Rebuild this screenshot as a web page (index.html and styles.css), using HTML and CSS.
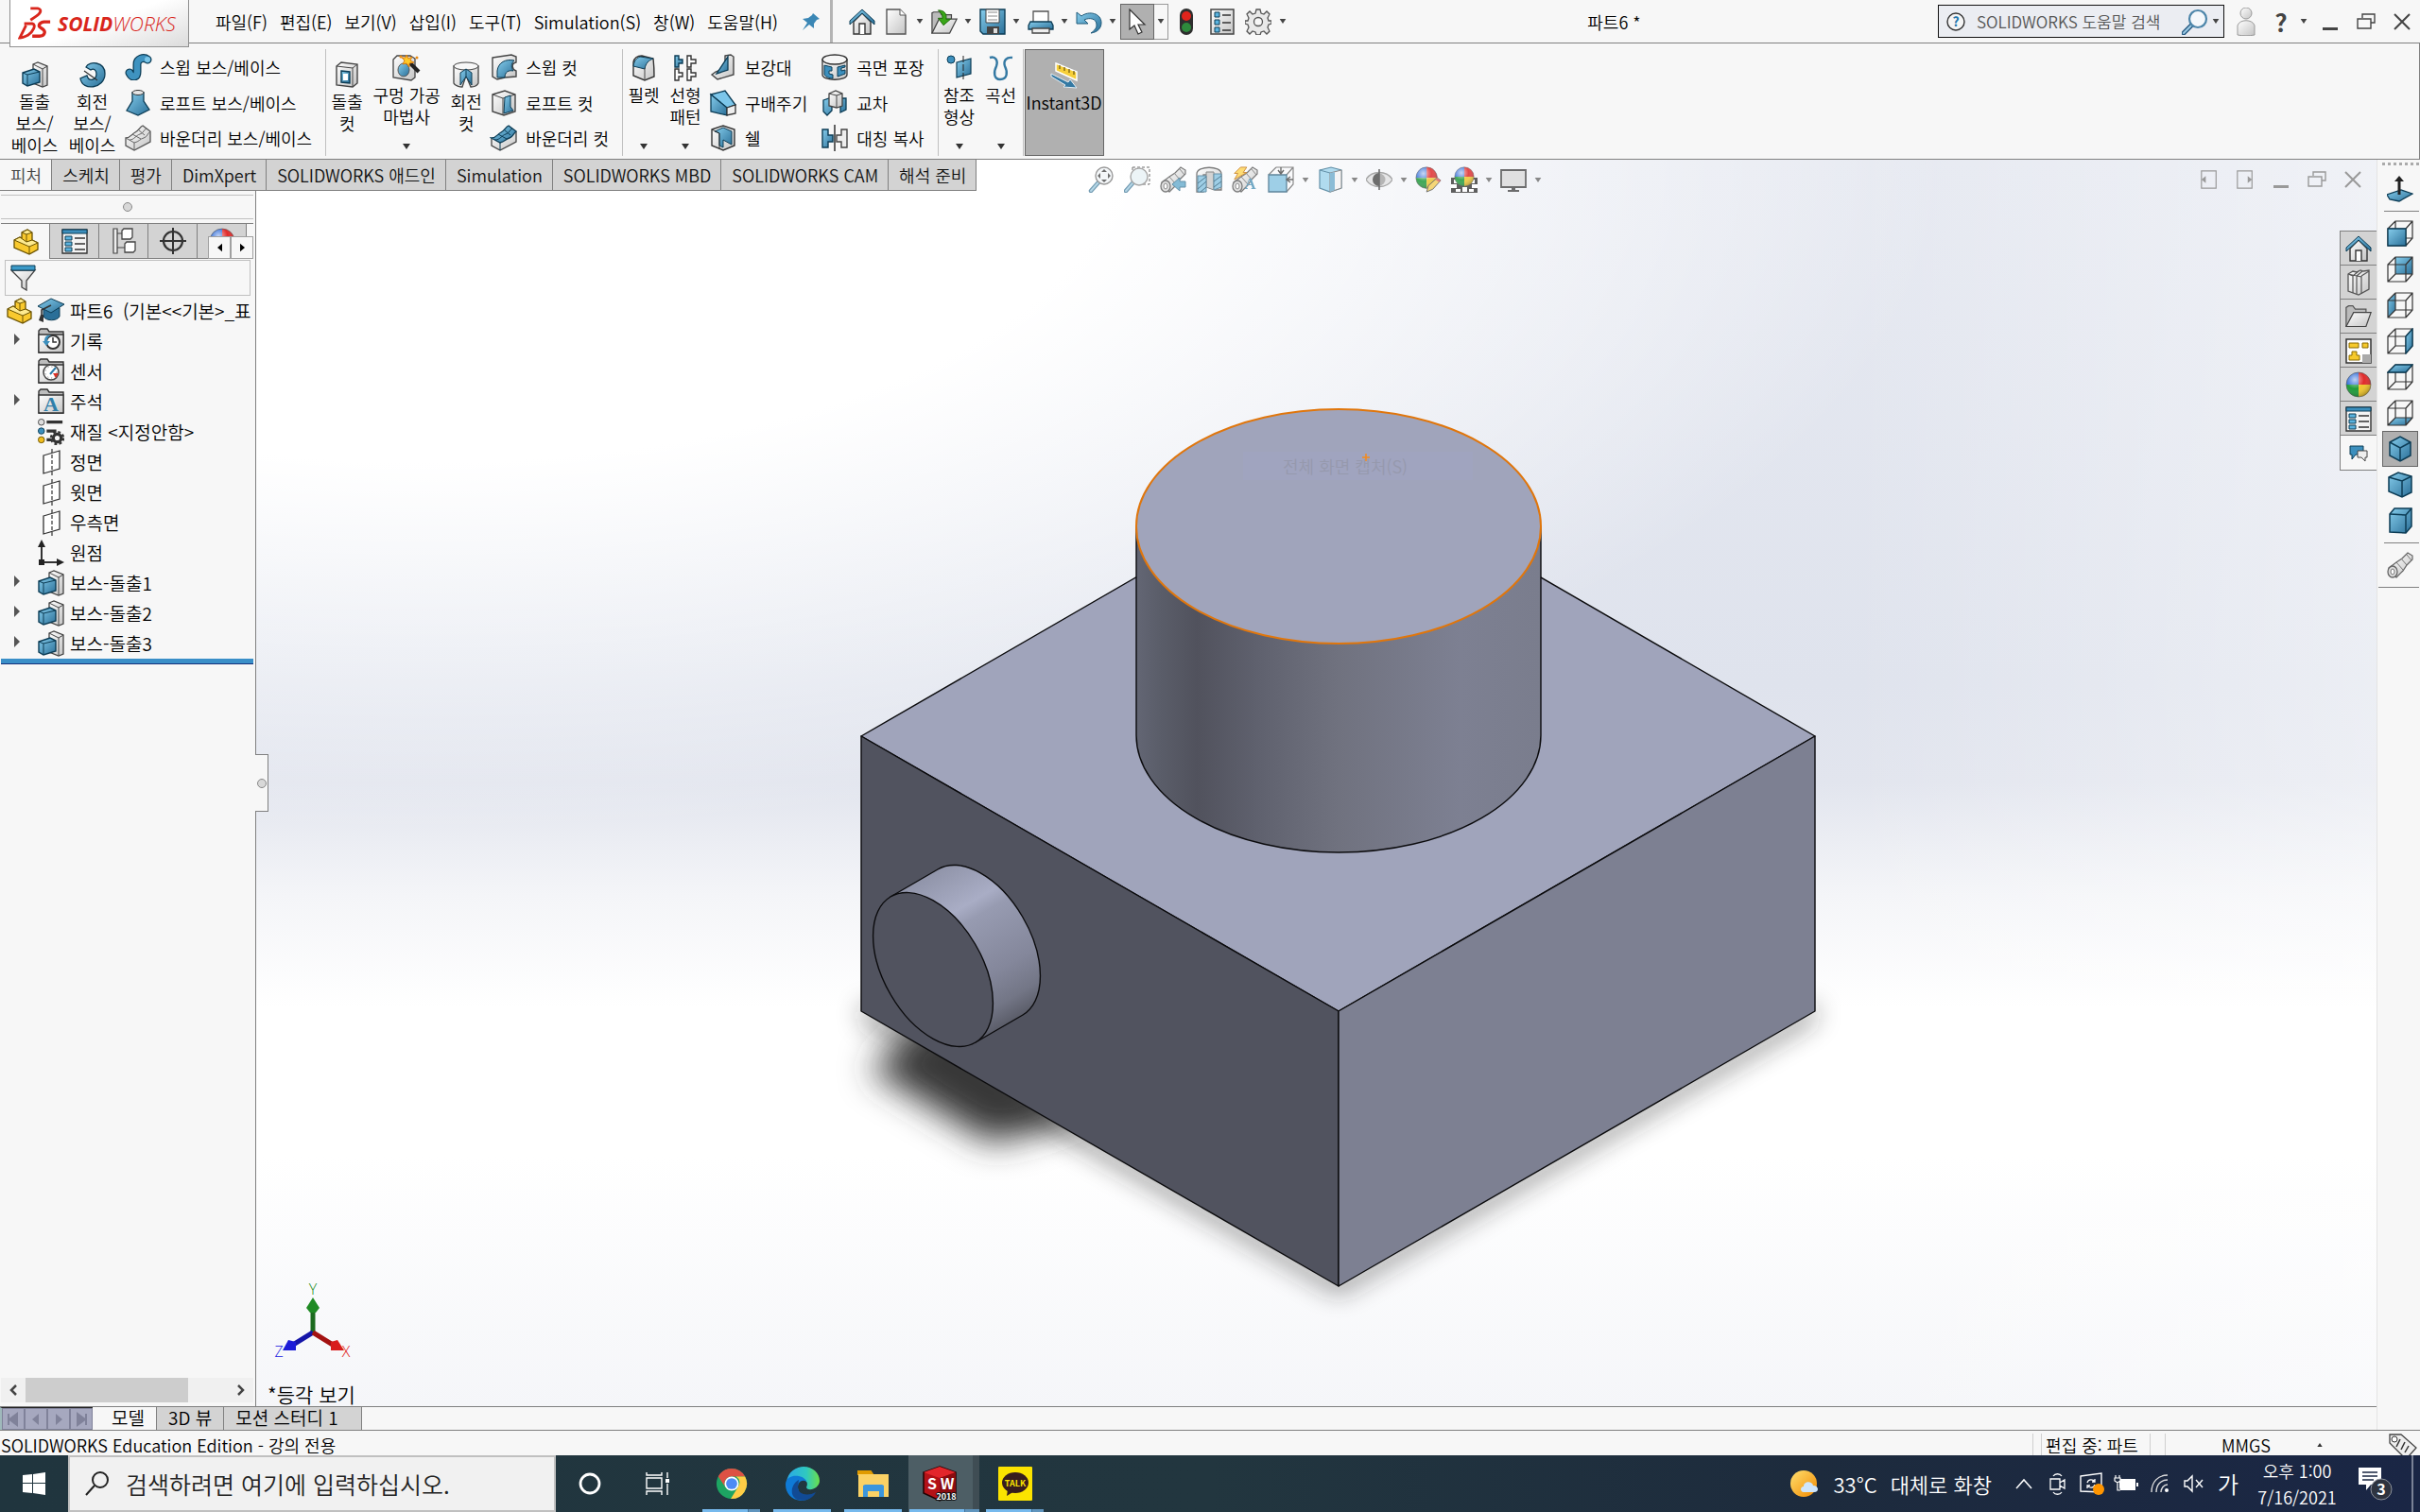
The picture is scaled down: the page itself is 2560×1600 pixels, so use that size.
FILE: index.html
```html
<!DOCTYPE html>
<html lang="ko">
<head>
    <meta charset="UTF-8">
    <meta name="viewport" content="width=device-width, initial-scale=1.0">
    <title>SOLIDWORKS - 파트6</title>
    <link rel="stylesheet" href="styles.css">
</head>
<body>
    <!-- icon sprite -->
    <svg class="sprite" aria-hidden="true">
        <defs>
            <linearGradient id="blue" x1="0" y1="0" x2="1" y2="1"><stop offset="0" stop-color="#86cdec"/><stop offset="1" stop-color="#2a6f98"/></linearGradient>
            <linearGradient id="steel" x1="0" y1="0" x2="1" y2="1"><stop offset="0" stop-color="#ffffff"/><stop offset="1" stop-color="#c4c4c4"/></linearGradient>
            <linearGradient id="sun" x1="0" y1="0" x2="1" y2="1"><stop offset="0" stop-color="#ffe070"/><stop offset="1" stop-color="#f28a00"/></linearGradient>
            <linearGradient id="edge-top" x1="0" y1="0" x2="1" y2="0"><stop offset="0" stop-color="#2aa9e8"/><stop offset="0.6" stop-color="#2fc8c0"/><stop offset="1" stop-color="#6be04a"/></linearGradient>
            <radialGradient id="shine" cx="0.35" cy="0.3" r="0.75"><stop offset="0" stop-color="#fff" stop-opacity="0.7"/><stop offset="0.5" stop-color="#fff" stop-opacity="0"/><stop offset="1" stop-color="#000" stop-opacity="0.3"/></radialGradient>
        </defs>

        <symbol id="i-arrow" viewBox="0 0 8 6"><path d="M0 0h8L4 6z" fill="currentColor"/></symbol>
        <symbol id="i-home" viewBox="0 0 28 28"><path d="M5 14v13h18V14l-9-9z" fill="url(#steel)" stroke="#333" stroke-width="1.4"/><path d="M11 27v-11h6v11" fill="#fff" stroke="#333" stroke-width="1.4"/><path d="M1 13L14 1l13 12v4L14 5 1 17z" fill="url(#blue)" stroke="#0c3c55"/></symbol>
        <symbol id="i-new" viewBox="0 0 28 28"><path d="M4 1h14l6 6v20H4z" fill="url(#steel)" stroke="#555" stroke-width="1.4"/><path d="M18 1v6h6" fill="#fff" stroke="#555"/></symbol>
        <symbol id="i-open" viewBox="0 0 30 28"><path d="M1 27V4l2-1h7l2 3h11v5" fill="#bbb" stroke="#444" stroke-width="1.3"/><path d="M1 27L9 11h20l-8 16z" fill="url(#steel)" stroke="#444" stroke-width="1.3"/><path d="M8 1c7 0 10 4 9 10h5l-8 7-6-8h5c0-4-2-6-5-9z" fill="#39a618" stroke="#1b6808"/></symbol>
        <symbol id="i-save" viewBox="0 0 28 28"><path d="M1 1h26v26H4l-3-3z" fill="url(#blue)" stroke="#0c3c55" stroke-width="1.4"/><path d="M7 1h14v14H7z" fill="#fff" stroke="#444"/><path d="M9 4h10M9 8h10M9 12h10" stroke="#888"/><path d="M8 19h13v8H8z" fill="#444"/><path d="M15 21h4v5h-4z" fill="#ddd"/></symbol>
        <symbol id="i-print" viewBox="0 0 28 28"><path d="M6 3h16v12H6z" fill="#fff" stroke="#555" stroke-width="1.3"/><path d="M3 14h22l2 4v4H1v-4z" fill="url(#blue)" stroke="#0c3c55" stroke-width="1.3"/><path d="M5 21h18v5H5z" fill="#eee" stroke="#444" stroke-width="1.3"/></symbol>
        <symbol id="i-undo" viewBox="0 0 28 28"><path d="M1 4v12h12l-4-4c6-3 13-1 13 5 0 4-2 6-6 9 7-1 11-5 11-11C27 5 14 2 6 8z" fill="url(#blue)" stroke="#1d5878"/></symbol>
        <symbol id="i-cursor" viewBox="0 0 28 28"><path d="M6 1v21l5-4 4 9 4-2-4-8h7z" fill="#fff" stroke="#333" stroke-width="1.2"/></symbol>
        <symbol id="i-light" viewBox="0 0 28 28"><rect x="7" y="0" width="14" height="28" rx="7" fill="#2e2e2e"/><circle cx="14" cy="8" r="5" fill="#e0241c"/><circle cx="14" cy="20" r="5" fill="#2e8a3c"/></symbol>
        <symbol id="i-options" viewBox="0 0 28 28"><path d="M2 1h24v26H2z" fill="url(#steel)" stroke="#444" stroke-width="1.5"/><path d="M6 4h5v5H6zM6 12h5v5H6zM6 20h5v5H6z" fill="#5bb4e0" stroke="#0c3c55"/><path d="M14 7h9M14 15h9M14 23h9" stroke="#333" stroke-width="1.3"/></symbol>
        <symbol id="i-gear" viewBox="0 0 28 28"><path d="M12 1h4l1 4 3 1 3-3 3 3-2 4 1 3 3 0v3l-3 1-1 3 2 4-3 3-3-3-3 1-1 3h-4l-1-3-3-1-3 3-3-3 2-4-1-3-3-1v-3l3 0 1-3-2-4 3-3 3 3 3-1z" fill="#e9e9e9" stroke="#555" stroke-width="1.3"/><circle cx="14" cy="14" r="4.500" fill="#f7f7f7" stroke="#555" stroke-width="1.3"/></symbol>
        <symbol id="i-pin" viewBox="0 0 20 20"><path d="M12 1l7 6-3 1-3 4 0 5-5-4-7 6 5-8-5-4 6-1 4-3z" fill="#3b87b5"/></symbol>
        <symbol id="i-lens" viewBox="0 0 28 28"><path d="M11 17l-9 9" stroke="#2c5f86" stroke-width="5" stroke-linecap="round"/><path d="M11 17l-9 9" stroke="#9ccbe6" stroke-width="2" stroke-linecap="round"/><circle cx="17" cy="11" r="9" fill="#f4f8fb" stroke="#4d86aa" stroke-width="2.200"/></symbol>
        <symbol id="i-user" viewBox="0 0 20 30"><circle cx="10" cy="6" r="6" fill="url(#steel)" stroke="#999"/><path d="M1 29V19c2-7 16-7 18 0v10c-5 1-13 1-18 0z" fill="url(#steel)" stroke="#999"/></symbol>
        <symbol id="i-min" viewBox="0 0 20 20"><path d="M2 16h16v3H2z" fill="currentColor"/></symbol>
        <symbol id="i-restore" viewBox="0 0 20 20"><path d="M6 6V2h13v9h-4M1 7h14v10H1z" fill="none" stroke="currentColor" stroke-width="1.4"/></symbol>
        <symbol id="i-close" viewBox="0 0 20 20"><path d="M2 2l16 16M18 2L2 18" stroke="currentColor" stroke-width="2"/></symbol>
        <symbol id="i-prev-doc" viewBox="0 0 20 22"><path d="M1 1h17v20H1z" fill="none" stroke="currentColor" stroke-width="1.3"/><path d="M6 7v8l-5-4z" fill="currentColor"/></symbol>
        <symbol id="i-next-doc" viewBox="0 0 20 22"><path d="M1 1h17v20H1z" fill="none" stroke="currentColor" stroke-width="1.3"/><path d="M13 7v8l5-4z" fill="currentColor"/></symbol>

        <symbol id="i-extrude" viewBox="0 0 28 28"><path d="M12 3l5-2 10 4v20l-5 2-10-4z" fill="url(#steel)" stroke="#444" stroke-width="1.3"/><path d="M22 8v19M12 3l10 5 5-3" fill="none" stroke="#444"/><path d="M1 12l12-4 6 3v11L6 26l-5-3z" fill="url(#blue)" stroke="#0c3c55" stroke-width="1.4"/><path d="M1 12l5 2 13-3M6 14v12" fill="none" stroke="#0c3c55"/></symbol>
        <symbol id="i-revolve" viewBox="0 0 28 28"><path d="M7 6C10-1 27 0 27 13c0 16-24 19-26 5l7-3c2 7 10 5 10-2 0-4-3-6-6-4z" fill="url(#blue)" stroke="#0c3c55" stroke-width="1.3"/><path d="M5 10l14 10" stroke="#333" stroke-width="1.3"/></symbol>
        <symbol id="i-sweep" viewBox="0 0 28 28"><path d="M5 20c3 6 8 5 8-1V11c0-6 7-8 11-5" fill="none" stroke="#0c3c55" stroke-width="9" stroke-linecap="round"/><path d="M5 20c3 6 8 5 8-1V11c0-6 7-8 11-5" fill="none" stroke="#3f93c0" stroke-width="6.500" stroke-linecap="round"/><circle cx="24" cy="6" r="3" fill="#7cc6e8"/></symbol>
        <symbol id="i-loft" viewBox="0 0 28 28"><path d="M8 3h12v9l6 9-12 6-12-5 6-10z" fill="url(#blue)" stroke="#0c3c55" stroke-width="1.3"/><ellipse cx="14" cy="3" rx="6" ry="2.500" fill="#e5e5e5" stroke="#333"/></symbol>
        <symbol id="i-boundary" viewBox="0 0 28 28"><path d="M1 14c5 0 6-4 10-6s5-6 8-7l8 6v11L10 27l-9-5z" fill="url(#steel)" stroke="#555" stroke-width="1.3"/><path d="M1 14l9 5c5-1 6-4 10-5s4-5 7-7M10 19v8M5 16c5 0 7-5 11-6s4-5 7-6M8 10l9 5M14 5l7 6" fill="none" stroke="#666"/></symbol>
        <symbol id="i-boundary-cut" viewBox="0 0 28 28"><path d="M1 14v8l9 5 17-9V7" fill="url(#steel)" stroke="#444" stroke-width="1.3"/><path d="M1 14c5 0 6-4 10-6s5-6 8-7l8 6c-3 2-3 6-7 7s-5 4-10 5z" fill="url(#blue)" stroke="#0c3c55" stroke-width="1.3"/><path d="M10 19v8M5 16c5 0 7-5 11-6s4-5 7-6M8 10l9 5M14 5l7 6" fill="none" stroke="#0c3c55"/></symbol>
        <symbol id="i-cut" viewBox="0 0 28 28"><path d="M3 5l5-4 17 2v20l-5 4-17-2z" fill="url(#steel)" stroke="#444" stroke-width="1.4"/><path d="M3 5l17 2 5-4M20 7v20" fill="none" stroke="#444"/><path d="M8 10l9 1v12l-9-1z" fill="url(#blue)" stroke="#0c3c55" stroke-width="1.400"/><path d="M10 20v-7h5v7z" fill="#fff"/></symbol>
        <symbol id="i-hole" viewBox="0 0 30 28"><path d="M1 5l4-4h14l5 3v20l-4 3-19-3z" fill="url(#steel)" stroke="#444" stroke-width="1.3"/><ellipse cx="12" cy="16" rx="6" ry="7" fill="url(#blue)" stroke="#555"/><path d="M15 5l13 13" stroke="#222" stroke-width="4"/><path d="M15 0l2 4 4-2-2 4 4 2-5 1 0 4-3-4-4 1 2-4-3-3 4 0z" fill="#ffc928" stroke="#d87c10"/><circle cx="26" cy="3" r="1.500" fill="#e88b12"/><circle cx="9" cy="2" r="1.500" fill="#e88b12"/></symbol>
        <symbol id="i-rev-cut" viewBox="0 0 28 28"><path d="M1 5v18c1 3 7 4 9 4l4-12 5 12c4 0 7-2 8-4V5z" fill="url(#steel)" stroke="#444" stroke-width="1.3"/><ellipse cx="14" cy="5" rx="13" ry="4" fill="#f7f7f7" stroke="#444"/><path d="M8 12l6-4 6 4v13l-6-9-6 9z" fill="url(#blue)" stroke="#0c3c55"/><path d="M14 8v9" stroke="#0c3c55"/></symbol>
        <symbol id="i-sweep-cut" viewBox="0 0 28 28"><path d="M2 4l20-3 5 2v6c-6 1-4 8 0 9v6l-12 1-8 2-5-3z" fill="url(#steel)" stroke="#444" stroke-width="1.4"/><path d="M7 25V18C8 9 16 5 25 7c-4 4-3 8-1 11-5-1-9 1-9 7z" fill="url(#blue)" stroke="#0c3c55"/></symbol>
        <symbol id="i-loft-cut" viewBox="0 0 28 28"><path d="M2 5l13-4 11 4v18l-12 4-12-4z" fill="url(#steel)" stroke="#444" stroke-width="1.4"/><path d="M2 5l11 4 13-4M13 9v18" fill="none" stroke="#444"/><path d="M15 8l6-2v12l3 4-10 3z" fill="url(#blue)" stroke="#0c3c55"/></symbol>
        <symbol id="i-fillet" viewBox="0 0 28 28"><path d="M3 8c1-5 5-7 9-7l12 3c0 1 1 6 1 19l-10 4L3 22z" fill="url(#steel)" stroke="#333" stroke-width="1.4"/><path d="M3 12c1-6 3-8 7-10l14 2c-5 2-8 5-9 11z" fill="url(#blue)" stroke="#0c3c55"/><path d="M15 14v13" stroke="#444"/></symbol>
        <symbol id="i-pattern" viewBox="0 0 28 28"><path d="M3 1h4v4h4v4H7v4H3z" fill="url(#blue)" stroke="#0c3c55" stroke-width="1.400"/><path d="M16 1h4v4h5v4h-5v4h-4zM3 15h4v4h4v4H7v4H3zM16 15h4v4h5v4h-5v4h-4z" fill="#fff" stroke="#333" stroke-width="1.4"/></symbol>
        <symbol id="i-rib" viewBox="0 0 28 28"><path d="M16 2l6-1 3 2v19L8 27l-6-5 4-3 10-4z" fill="url(#steel)" stroke="#444" stroke-width="1.4"/><path d="M19 3v14L7 21z" fill="url(#blue)" stroke="#0c3c55" stroke-width="1.300"/></symbol>
        <symbol id="i-draft" viewBox="0 0 28 28"><path d="M1 5l15-4 11 15-9 3z" fill="#7cc6ea" stroke="#0c3c55" stroke-width="1.3"/><path d="M1 5l17 14v8L1 23z" fill="url(#blue)" stroke="#0c3c55" stroke-width="1.3"/><path d="M18 19l9-3v9l-9 2z" fill="#eee" stroke="#333" stroke-width="1.3"/></symbol>
        <symbol id="i-shell" viewBox="0 0 28 28"><path d="M2 5l12-4 12 4v17l-12 5-12-5z" fill="url(#steel)" stroke="#333" stroke-width="1.400"/><path d="M5 7l9-4 9 4v14l-9-5v8l-4-2V9z" fill="url(#blue)" stroke="#0c3c55"/><path d="M2 5l8 4v17" fill="none" stroke="#333"/></symbol>
        <symbol id="i-wrap" viewBox="0 0 28 28"><path d="M1 6v16c0 7 26 7 26 0V6z" fill="url(#steel)" stroke="#333" stroke-width="1.3"/><ellipse cx="14" cy="6" rx="13" ry="5" fill="#f6f6f6" stroke="#333" stroke-width="1.3"/><path d="M3 12l8 2v4H8v3l4 1v4c-4 0-8-2-9-4zM25 12l-8 2v10l8-3v-4l-4 1v-3l4-1z" fill="#3c8fbd" stroke="#0c3c55"/></symbol>
        <symbol id="i-intersect" viewBox="0 0 28 28"><path d="M2 11l9-3v14l-5 5-4-4zM20 9h6v12l-6 3z" fill="url(#blue)" stroke="#0c3c55" stroke-width="1.3"/><path d="M8 4l7-3 7 3v13l-6 2-8-2z" fill="url(#steel)" stroke="#444" stroke-width="1.3"/><path d="M8 4l8 2 6-2M16 6v13" fill="none" stroke="#444"/></symbol>
        <symbol id="i-mirror" viewBox="0 0 28 28"><path d="M1 5h6v6h5v7H7v6H1z" fill="url(#blue)" stroke="#0c3c55" stroke-width="1.400"/><path d="M27 5h-6v6h-5v7h5v6h6z" fill="#eee" stroke="#444" stroke-width="1.400"/><path d="M14 0v28" stroke="#222" stroke-width="1.4"/></symbol>
        <symbol id="i-ref" viewBox="0 0 28 28"><circle cx="5" cy="5" r="4" fill="#3c8fbd" stroke="#0c3c55"/><path d="M11 8l15-4v16l-15 4z" fill="url(#blue)" stroke="#0c3c55" stroke-width="1.2"/><path d="M18 1v27" stroke="#222" stroke-dasharray="7 2"/></symbol>
        <symbol id="i-curve" viewBox="0 0 28 28"><path d="M2 3c6-2 9 3 7 9-3 6-3 14 4 14 8 0 8-8 5-14-2-6 2-10 8-9" fill="none" stroke="#3479a3" stroke-width="2.400"/></symbol>
        <symbol id="i-instant" viewBox="0 0 30 28"><path d="M6 1l22 9v9L6 9z" fill="#f6cf3a" stroke="#fff" stroke-width="1.5"/><path d="M10 3v4M15 5v4M20 7v4M25 9v4" stroke="#6b5610" stroke-width="1.2"/><path d="M1 12l18 9 2-3 7 9-14-1 2-2-15-9z" fill="#3479a3" stroke="#e4eef4"/></symbol>

        <symbol id="i-zoom-fit" viewBox="0 0 28 28"><path d="M11 17l-8 9" stroke="#5a8aa5" stroke-width="4.500" stroke-linecap="round"/><path d="M11 17l-8 9" stroke="#a8cfe2" stroke-width="2" stroke-linecap="round"/><circle cx="17" cy="10" r="9" fill="#f3f6f8" stroke="#888" stroke-width="1.400"/><path d="M17 3l3 3h-6zM17 17l3-3h-6zM10 10l3-3v6zM24 10l-3-3v6z" fill="#555"/></symbol>
        <symbol id="i-zoom-area" viewBox="0 0 28 28"><path d="M9 1h18v18H20M9 1v4" fill="none" stroke="#555" stroke-dasharray="3 2"/><path d="M9 18l-7 8" stroke="#5a8aa5" stroke-width="4.500" stroke-linecap="round"/><path d="M9 18l-7 8" stroke="#a8cfe2" stroke-width="2" stroke-linecap="round"/><circle cx="16" cy="11" r="9" fill="#eaf3f6" stroke="#999" stroke-width="1.400"/></symbol>
        <symbol id="i-scope" viewBox="0 0 28 28"><path d="M2 17l8-6 6-4 6-6 5 3v4l-6 6-4 6-7 7z" fill="url(#steel)" stroke="#666" stroke-width="1.2"/><path d="M15 7l6 7M21 3l5 6M10 11l7 8" stroke="#777"/><ellipse cx="6" cy="21" rx="5" ry="6" fill="#ddd" stroke="#666" stroke-width="1.3"/><ellipse cx="6" cy="21" rx="2" ry="3" fill="#fff" stroke="#777"/></symbol>
        <symbol id="i-back-arrow" viewBox="0 0 28 28"><path d="M27 16v6h-6v4l-8-7 8-7v4z" fill="#6fb0d0" stroke="#4a7f9a"/></symbol>
        <symbol id="i-section" viewBox="0 0 28 28"><path d="M1 8c0-9 26-9 26 0v17h-7V9H8v18H1z" fill="url(#steel)" stroke="#666" stroke-width="1.3"/><path d="M11 6h8v19l-8-3z" fill="#ccc" stroke="#777"/><path d="M2 10h9v17H2zM19 8h8v14l-8 3z" fill="#8ec6e2" stroke="#4a7f9a"/><path d="M2 18l9-7M2 24l9-8M5 27l6-5M19 16l8-6M19 22l8-6" stroke="#33657f"/></symbol>
        <symbol id="i-cube-hud" viewBox="0 0 28 28"><path d="M9 1h18v18l-7 8M1 9l8-8M20 9l7-8" fill="none" stroke="#777" stroke-width="1.2"/><path d="M1 9h19v18H1z" fill="#8fc8e4" stroke="#44728a" stroke-width="1.300"/><path d="M14 1v6m-3-3l3 4 3-4M27 14h-6m3-3l-4 3 4 3" fill="none" stroke="#555" stroke-width="1.400"/></symbol>
        <symbol id="i-display" viewBox="0 0 28 28"><path d="M3 4l12-3 11 3v19l-12 4-11-4z" fill="#a4d6ee" stroke="#4a7f9a" stroke-width="1.200"/><path d="M14 7l12-3v19l-12 4z" fill="#f4f4f4" stroke="#777"/><path d="M14 7l5-1v19l-5 2z" fill="#79b2d0"/><path d="M3 4l11 3" stroke="#4a7f9a"/></symbol>
        <symbol id="i-eye" viewBox="0 0 28 28"><path d="M0 14C6 4 22 4 28 14 22 24 6 24 0 14z" fill="#e4e4e4" stroke="#999" stroke-width="1.3"/><circle cx="14" cy="14" r="6.500" fill="#aaa"/><path d="M14 7a7 7 0 0 0 0 14z" fill="#555"/><path d="M14 3v22" stroke="#555" stroke-width="1.6"/></symbol>
        <symbol id="i-ball" viewBox="0 0 28 28"><path d="M14 14V1A13 13 0 0 0 1 14z" fill="#2f6bd8"/><path d="M14 14h13A13 13 0 0 0 14 1z" fill="#e02b2b"/><path d="M14 14H1a13 13 0 0 0 13 13z" fill="#1f9a3a"/><path d="M14 14v13a13 13 0 0 0 13-13z" fill="#f0c62a"/><circle cx="14" cy="14" r="13" fill="url(#shine)" stroke="#555" stroke-width="0.600"/></symbol>
        <symbol id="i-appearance" viewBox="0 0 30 30"><use href="#i-ball" width="26" height="26"/><path d="M13 29l2-7 10-9 4 3-9 10z" fill="#f5d161" stroke="#555"/><path d="M25 13l4 3-2 2-4-3z" fill="#d66"/></symbol>
        <symbol id="i-scene" viewBox="0 0 28 28"><path d="M0 12h28v16H0z" fill="#444"/><path d="M3 14h5v4H3zM20 14h5v4h-5zM0 19h6v4H0zM12 22h5v5h-5zM22 19h6v4h-6zM5 24h5v3H5zM19 24h5v3h-5z" fill="#fff"/><use href="#i-ball" x="3" width="22" height="22"/></symbol>
        <symbol id="i-monitor" viewBox="0 0 28 28"><path d="M1 4h26v18H1z" fill="#ddd" stroke="#555" stroke-width="1.800"/><path d="M12 22h4v3h4v2H8v-2h4z" fill="#555"/></symbol>

        <symbol id="i-part" viewBox="0 0 28 28"><path d="M2 12l6-3 2 1V4l6-3 5 3v8l6 3v7l-9 5L2 20z" fill="#f9c92e" stroke="#6a5200" stroke-width="1.3"/><path d="M10 4l6-3 5 3-6 2zM2 12l6-3 7 5 6-2 6 3-9 4z" fill="#fdea90" stroke="#6a5200"/><path d="M15 6v8M18 19v8" stroke="#6a5200"/></symbol>
        <symbol id="i-props" viewBox="0 0 28 28"><path d="M1 2h26v25H1z" fill="#f4f4f4" stroke="#333" stroke-width="1.4"/><path d="M1 2h26v4H1z" fill="#3c8fbd" stroke="#0c3c55"/><path d="M4 9h7v4H4zM4 15h7v4H4zM4 21h7v4H4z" fill="#5bb4e0" stroke="#0c3c55"/><path d="M14 11h11M14 17h11M14 23h11" stroke="#333" stroke-width="1.3"/></symbol>
        <symbol id="i-config" viewBox="0 0 28 28"><path d="M3 1h4v26H3zM7 6h5M7 21h8" fill="#eee" stroke="#444" stroke-width="1.2"/><path d="M12 3l2-2h9v9l-2 2h-9zM15 17l2-2h9v9l-2 2h-9z" fill="#fff" stroke="#444" stroke-width="1.300"/></symbol>
        <symbol id="i-target" viewBox="0 0 28 28"><circle cx="14" cy="14" r="10" fill="none" stroke="#333" stroke-width="2.200"/><path d="M14 0v28M0 14h28" stroke="#333" stroke-width="2"/></symbol>
        <symbol id="i-filter" viewBox="0 0 28 28"><path d="M1 6h25L17 17v10l-5-3v-7z" fill="url(#steel)" stroke="#444" stroke-width="1.300"/><path d="M1 1h25v5H1z" fill="#3c9ac8" stroke="#0c3c55"/></symbol>
        <symbol id="i-cap" viewBox="0 0 28 28"><path d="M6 12v8c3 5 14 5 17 0v-9z" fill="#2a6f98" stroke="#0c3c55"/><path d="M0 9L14 1l14 6-14 9z" fill="url(#blue)" stroke="#0c3c55"/><path d="M14 8L4 13v7" fill="none" stroke="#333" stroke-width="1.600"/><path d="M3 18h3l0 8-5-2z" fill="#333"/></symbol>
        <symbol id="i-folder" viewBox="0 0 28 28"><path d="M1 26V3l2-2h7l2 3h15v22z" fill="#bdbdbd" stroke="#333" stroke-width="1.4"/><path d="M1 7h26v19H1z" fill="url(#steel)" stroke="#333" stroke-width="1.3"/></symbol>
        <symbol id="i-history" viewBox="0 0 28 28"><use href="#i-folder"/><circle cx="16" cy="15" r="7" fill="#fff" stroke="#333" stroke-width="2"/><path d="M16 10v5h4" fill="none" stroke="#333" stroke-width="1.500"/><path d="M5 14l4 5 4-5h-3c0-3 1-5 4-6-5-1-7 2-7 6z" fill="#3c8fbd"/></symbol>
        <symbol id="i-sensor" viewBox="0 0 28 28"><use href="#i-folder"/><circle cx="14" cy="15" r="8" fill="#fff" stroke="#444" stroke-width="1.500"/><circle cx="14" cy="15" r="6" fill="none" stroke="#777" stroke-dasharray="1 3"/><path d="M13 17l6-7" stroke="#2b7aa8" stroke-width="2"/><path d="M16 16h6l-3 5z" fill="#d93024"/></symbol>
        <symbol id="i-material" viewBox="0 0 30 30"><circle cx="4" cy="4" r="3.500" fill="#ddd" stroke="#444"/><circle cx="4" cy="14" r="3.500" fill="#3c8fbd" stroke="#0c3c55"/><circle cx="4" cy="24" r="3.500" fill="#f1bd1e" stroke="#6a5200"/><path d="M10 4h18M10 14h11M10 24h6" stroke="#333" stroke-width="3.500"/><circle cx="22" cy="22" r="4.500" fill="none" stroke="#333" stroke-width="3.500"/><circle cx="22" cy="22" r="7" fill="none" stroke="#333" stroke-width="2.500" stroke-dasharray="3 2.500"/></symbol>
        <symbol id="i-plane" viewBox="0 0 28 28"><path d="M6 7l17-5v19L6 26z" fill="#fff" stroke="#333" stroke-width="1.3"/><path d="M15 0v28" stroke="#333" stroke-width="1.200" stroke-dasharray="4 2"/></symbol>
        <symbol id="i-origin" viewBox="0 0 28 28"><path d="M4 24V5M4 24h20" stroke="#333" stroke-width="2"/><path d="M4 0l4 8H0zM28 24l-8-4v8zM1 21h6v6H1z" fill="#222"/></symbol>

        <symbol id="i-normal" viewBox="0 0 28 28"><path d="M0 20l15-5 12 4-14 8-10-2z" fill="url(#blue)" stroke="#0c3c55" stroke-width="1.300"/><path d="M13 20V3" stroke="#222" stroke-width="3"/><path d="M13 0l5 6H8z" fill="#222"/></symbol>
        <symbol id="i-wire" viewBox="0 0 28 28"><path d="M1 9h19v18H1zM9 1h18v18H9zM1 9l8-8M20 9l7-8M20 27l7-8M1 27l8-8" fill="none" stroke="#333" stroke-width="1.2"/></symbol>
        <symbol id="i-front" viewBox="0 0 28 28"><use href="#i-wire"/><path d="M1 9h19v18H1z" fill="url(#blue)" stroke="#0c3c55" stroke-width="1.300"/></symbol>
        <symbol id="i-rear" viewBox="0 0 28 28"><path d="M9 1h18v18H9z" fill="url(#blue)"/><use href="#i-wire"/></symbol>
        <symbol id="i-left" viewBox="0 0 28 28"><path d="M1 9l8-8v18l-8 8z" fill="url(#blue)"/><use href="#i-wire"/></symbol>
        <symbol id="i-right" viewBox="0 0 28 28"><use href="#i-wire"/><path d="M20 9l7-8v18l-7 8z" fill="url(#blue)" stroke="#0c3c55" stroke-width="1.300"/></symbol>
        <symbol id="i-top" viewBox="0 0 28 28"><use href="#i-wire"/><path d="M1 9l8-8h18l-7 8z" fill="url(#blue)" stroke="#0c3c55" stroke-width="1.300"/></symbol>
        <symbol id="i-bottom" viewBox="0 0 28 28"><path d="M1 27l8-8h18l-7 8z" fill="url(#blue)"/><use href="#i-wire"/></symbol>
        <symbol id="i-iso" viewBox="0 0 28 28"><path d="M3 7l11-6 11 6v14l-11 6-11-6z" fill="url(#blue)" stroke="#0c3c55" stroke-width="1.500"/><path d="M3 7l11 6 11-6M14 13v14" fill="none" stroke="#0c3c55" stroke-width="1.500"/></symbol>
        <symbol id="i-tri" viewBox="0 0 28 28"><path d="M2 6l10-5 14 4v17l-10 5-14-6z" fill="url(#blue)" stroke="#0c3c55" stroke-width="1.500"/><path d="M2 6l14 4 10-5M16 10v17" fill="none" stroke="#0c3c55" stroke-width="1.500"/></symbol>
        <symbol id="i-di" viewBox="0 0 28 28"><path d="M3 7l5-6h18v19l-6 7-17-1z" fill="url(#blue)" stroke="#0c3c55" stroke-width="1.500"/><path d="M3 7l17 1 6-7M20 8v19" fill="none" stroke="#0c3c55" stroke-width="1.500"/></symbol>
        <symbol id="i-library" viewBox="0 0 28 28"><path d="M3 5l5-3 4 1 4-2 3 1 6-1v20l-11 6-11-4z" fill="url(#steel)" stroke="#555" stroke-width="1.3"/><path d="M3 5l5 2v18M8 7l6-5M12 7v19M12 7l6-5M17 7v19M17 7l8-5M3 5l14 3" fill="none" stroke="#555" stroke-width="1.200"/></symbol>
        <symbol id="i-folder-open" viewBox="0 0 32 28"><path d="M1 26V3l3-2h5l3 4h13v5" fill="#bbb" stroke="#555" stroke-width="1.400"/><path d="M1 26L10 9h21l-6 17z" fill="url(#steel)" stroke="#444" stroke-width="1.400"/></symbol>
        <symbol id="i-palette" viewBox="0 0 28 28"><path d="M1 2h26v25H1z" fill="#fff" stroke="#333" stroke-width="1.5"/><path d="M4 6h10v5H4zM18 6h6v5h-6zM7 15h5v4h3v5H4v-5h3z" fill="#f6c92c" stroke="#8a6a00"/><path d="M18 18h9v9h-9z" fill="#aaa"/></symbol>
        <symbol id="i-forum" viewBox="0 0 28 28"><path d="M5 7h14v9h-8l-4 5v-5H5z" fill="#3c8fbd" stroke="#0c3c55"/><path d="M13 12h10v7h-2v4l-4-4h-4z" fill="#eee" stroke="#444"/></symbol>
        <symbol id="i-tag" viewBox="0 0 30 24"><path d="M1 1h12l16 14-8 9H15L1 10z" fill="#eee" stroke="#444" stroke-width="1.300"/><circle cx="6" cy="6" r="3" fill="#fff" stroke="#333"/><path d="M12 6l-4 8M17 9l-4 8M21 13l-4 7" stroke="#333" stroke-width="1.500"/></symbol>
    </svg>

    <header class="titlebar">
        <div class="logo">
            <svg class="logo-mark" viewBox="0 0 38 36" fill="none" stroke="#d9261c" aria-hidden="true">
                <path d="M14 1h8c5 1 4 5-2 9l-6 4" stroke-width="3"/>
                <path d="M7 18h9c5 1 1 9-5 13-4 2-6 3-9 3L9 20" stroke-width="3"/>
                <path d="M36 16h-7c-6 1-7 5-3 7 7 4 3 9-2 9h-8" stroke-width="3.500"/>
            </svg>
            <span class="logo-text"><b>SOLID</b>WORKS</span>
        </div>
        <nav class="menu">
            <button>파일(F)</button>
            <button>편집(E)</button>
            <button>보기(V)</button>
            <button>삽입(I)</button>
            <button>도구(T)</button>
            <button>Simulation(S)</button>
            <button>창(W)</button>
            <button>도움말(H)</button>
        </nav>
        <button class="pin" aria-label="메뉴 고정"><svg width="20" height="20"><use href="#i-pin"/></svg></button>
        <div class="quick">
            <button class="tool" aria-label="홈"><svg><use href="#i-home"/></svg></button>
            <button class="tool" aria-label="새 문서"><svg><use href="#i-new"/></svg></button>
            <button class="drop" aria-label="새 문서 옵션"><svg><use href="#i-arrow"/></svg></button>
            <button class="tool" aria-label="열기"><svg><use href="#i-open"/></svg></button>
            <button class="drop" aria-label="열기 옵션"><svg><use href="#i-arrow"/></svg></button>
            <button class="tool" aria-label="저장"><svg><use href="#i-save"/></svg></button>
            <button class="drop" aria-label="저장 옵션"><svg><use href="#i-arrow"/></svg></button>
            <button class="tool" aria-label="인쇄"><svg><use href="#i-print"/></svg></button>
            <button class="drop" aria-label="인쇄 옵션"><svg><use href="#i-arrow"/></svg></button>
            <button class="tool" aria-label="실행 취소"><svg><use href="#i-undo"/></svg></button>
            <button class="drop" aria-label="실행 취소 옵션"><svg><use href="#i-arrow"/></svg></button>
            <button class="tool pressed" aria-label="선택"><svg><use href="#i-cursor"/></svg></button>
            <button class="drop boxed" aria-label="선택 옵션"><svg><use href="#i-arrow"/></svg></button>
            <button class="tool wide" aria-label="재생성"><svg><use href="#i-light"/></svg></button>
            <button class="tool wide" aria-label="파일 속성"><svg><use href="#i-options"/></svg></button>
            <button class="tool wide" aria-label="옵션"><svg><use href="#i-gear"/></svg></button>
            <button class="drop" aria-label="옵션 메뉴"><svg><use href="#i-arrow"/></svg></button>
        </div>
        <div class="doc-title">파트6 *</div>
        <div class="help-search">
            <svg width="20" height="20" viewBox="0 0 20 20"><circle cx="10" cy="10" r="9" fill="#f5f5f5" stroke="#333" stroke-width="1.4"/><text x="10" y="15" text-anchor="middle" font-size="14" font-weight="700" fill="#2377ad">?</text></svg>
            <input type="text" placeholder="SOLIDWORKS 도움말 검색" aria-label="SOLIDWORKS 도움말 검색">
            <button aria-label="검색"><svg width="28" height="28"><use href="#i-lens"/></svg></button>
            <button class="drop" aria-label="검색 옵션"><svg><use href="#i-arrow"/></svg></button>
        </div>
        <button class="user" aria-label="로그인"><svg width="20" height="30"><use href="#i-user"/></svg></button>
        <button class="question" aria-label="도움말">?</button>
        <button class="drop help-drop" aria-label="도움말 옵션"><svg><use href="#i-arrow"/></svg></button>
        <button class="win-btn" aria-label="최소화"><svg><use href="#i-min"/></svg></button>
        <button class="win-btn" aria-label="복원"><svg><use href="#i-restore"/></svg></button>
        <button class="win-btn" aria-label="닫기"><svg><use href="#i-close"/></svg></button>
    </header>

    <section class="ribbon">
        <div class="group">
            <button class="big low"><svg><use href="#i-extrude"/></svg><span>돌출<br>보스/<br>베이스</span></button>
            <button class="big low"><svg><use href="#i-revolve"/></svg><span>회전<br>보스/<br>베이스</span></button>
            <div class="stack">
                <button><svg><use href="#i-sweep"/></svg>스윕 보스/베이스</button>
                <button><svg><use href="#i-loft"/></svg>로프트 보스/베이스</button>
                <button><svg><use href="#i-boundary"/></svg>바운더리 보스/베이스</button>
            </div>
        </div>
        <div class="group">
            <button class="big low slim"><svg><use href="#i-cut"/></svg><span>돌출<br>컷</span></button>
            <button class="big hole"><svg><use href="#i-hole"/></svg><span>구멍 가공<br>마법사</span><svg class="more"><use href="#i-arrow"/></svg></button>
            <button class="big low slim"><svg><use href="#i-rev-cut"/></svg><span>회전<br>컷</span></button>
            <div class="stack">
                <button><svg><use href="#i-sweep-cut"/></svg>스윕 컷</button>
                <button><svg><use href="#i-loft-cut"/></svg>로프트 컷</button>
                <button><svg><use href="#i-boundary-cut"/></svg>바운더리 컷</button>
            </div>
        </div>
        <div class="group">
            <button class="big slim"><svg><use href="#i-fillet"/></svg><span>필렛</span><svg class="more"><use href="#i-arrow"/></svg></button>
            <button class="big slim"><svg><use href="#i-pattern"/></svg><span>선형<br>패턴</span><svg class="more"><use href="#i-arrow"/></svg></button>
            <div class="stack">
                <button><svg><use href="#i-rib"/></svg>보강대</button>
                <button><svg><use href="#i-draft"/></svg>구배주기</button>
                <button><svg><use href="#i-shell"/></svg>쉘</button>
            </div>
            <div class="stack second">
                <button><svg><use href="#i-wrap"/></svg>곡면 포장</button>
                <button><svg><use href="#i-intersect"/></svg>교차</button>
                <button><svg><use href="#i-mirror"/></svg>대칭 복사</button>
            </div>
        </div>
        <div class="group tight">
            <button class="big slim"><svg><use href="#i-ref"/></svg><span>참조<br>형상</span><svg class="more"><use href="#i-arrow"/></svg></button>
            <button class="big slim"><svg><use href="#i-curve"/></svg><span>곡선</span><svg class="more"><use href="#i-arrow"/></svg></button>
        </div>
        <button class="big low instant"><svg><use href="#i-instant"/></svg><span>Instant3D</span></button>
    </section>

    <div class="workspace">
        <nav class="ribbon-tabs">
            <button class="active">피처</button>
            <button>스케치</button>
            <button>평가</button>
            <button>DimXpert</button>
            <button>SOLIDWORKS 애드인</button>
            <button>Simulation</button>
            <button>SOLIDWORKS MBD</button>
            <button>SOLIDWORKS CAM</button>
            <button>해석 준비</button>
        </nav>

        <div class="main">
            <div class="content">
                <aside class="panel">
                    <div class="panel-grip"><i></i></div>
                    <div class="panel-tabs">
                        <button class="active" aria-label="FeatureManager"><svg><use href="#i-part"/></svg></button>
                        <button aria-label="PropertyManager"><svg><use href="#i-props"/></svg></button>
                        <button aria-label="ConfigurationManager"><svg><use href="#i-config"/></svg></button>
                        <button aria-label="DimXpertManager"><svg><use href="#i-target"/></svg></button>
                        <button aria-label="DisplayManager"><svg><use href="#i-ball"/></svg></button>
                        <div class="tab-scroll">
                            <button aria-label="이전 탭"><svg viewBox="0 0 8 12"><path d="M7 1v10L1 6z"/></svg></button>
                            <button aria-label="다음 탭"><svg viewBox="0 0 8 12"><path d="M1 1v10l6-5z"/></svg></button>
                        </div>
                    </div>
                    <label class="filter">
                        <svg width="28" height="28"><use href="#i-filter"/></svg>
                        <input type="text" aria-label="트리 필터">
                    </label>
                    <ul class="tree">
                        <li class="root"><svg><use href="#i-part"/></svg><svg><use href="#i-cap"/></svg><span>파트6&nbsp; (기본&lt;&lt;기본&gt;_표</span></li>
                        <li class="node"><svg><use href="#i-history"/></svg><span>기록</span></li>
                        <li><svg><use href="#i-sensor"/></svg><span>센서</span></li>
                        <li class="node"><svg viewBox="0 0 28 28"><use href="#i-folder"/><text class="letter-a" x="14" y="24" text-anchor="middle" font-size="22" fill="#2f7faa">A</text></svg><span>주석</span></li>
                        <li><svg><use href="#i-material"/></svg><span>재질 &lt;지정안함&gt;</span></li>
                        <li><svg><use href="#i-plane"/></svg><span>정면</span></li>
                        <li><svg><use href="#i-plane"/></svg><span>윗면</span></li>
                        <li><svg><use href="#i-plane"/></svg><span>우측면</span></li>
                        <li><svg><use href="#i-origin"/></svg><span>원점</span></li>
                        <li class="node"><svg><use href="#i-extrude"/></svg><span>보스-돌출1</span></li>
                        <li class="node"><svg><use href="#i-extrude"/></svg><span>보스-돌출2</span></li>
                        <li class="node"><svg><use href="#i-extrude"/></svg><span>보스-돌출3</span></li>
                    </ul>
                    <div class="rollback"></div>
                    <div class="scrollbar">
                        <button aria-label="왼쪽으로"><svg width="10" height="12" viewBox="0 0 10 12"><path d="M8 1L3 6l5 5" fill="none" stroke="#444" stroke-width="2.500"/></svg></button>
                        <div class="track"><div class="thumb"></div></div>
                        <button aria-label="오른쪽으로"><svg width="10" height="12" viewBox="0 0 10 12"><path d="M2 1l5 5-5 5" fill="none" stroke="#444" stroke-width="2.500"/></svg></button>
                    </div>
                </aside>

                <main class="viewport">
                    <!-- model, drawn in window coordinates -->
                    <svg class="model" viewBox="271 169 2243 1319" aria-label="파트6 모델">
                        <defs>
                            <linearGradient id="cyl" x1="1202" x2="1630" y1="0" y2="0" gradientUnits="userSpaceOnUse">
                                <stop offset="0" stop-color="#636674"/><stop offset="0.06" stop-color="#5a5d69"/><stop offset="0.15" stop-color="#51525d"/>
                                <stop offset="0.3" stop-color="#5f616e"/><stop offset="0.5" stop-color="#70727f"/><stop offset="0.8" stop-color="#7d8092"/><stop offset="1" stop-color="#7a7d8d"/>
                            </linearGradient>
                            <linearGradient id="boss" x1="967" y1="934" x2="1057" y2="1088" gradientUnits="userSpaceOnUse">
                                <stop offset="0" stop-color="#9094a9"/><stop offset="0.27" stop-color="#a9adc5"/><stop offset="0.36" stop-color="#979bb1"/>
                                <stop offset="0.7" stop-color="#84879b"/><stop offset="0.88" stop-color="#737686"/><stop offset="1" stop-color="#5b5d69"/>
                            </linearGradient>
                            <filter id="soft" x="-50%" y="-50%" width="200%" height="200%"><feGaussianBlur stdDeviation="14"/></filter>
                            <filter id="softer" x="-50%" y="-50%" width="200%" height="200%"><feGaussianBlur stdDeviation="18"/></filter>
                        </defs>
                        <path d="M915 1062L1416 1352l504-290v16l-504 290-505-290z" fill="#222" opacity="0.600" filter="url(#soft)"/>
                        <path d="M920 1132l75-67 160 110-64 24-44 10z" fill="#383838" filter="url(#softer)"/>
                        <g stroke="#0b0b0d" stroke-width="1.400" stroke-linejoin="round">
                            <path d="M911 779l505-292 504 292-504 291z" fill="#a0a4bb"/>
                            <path d="M911 779l505 291v291L911 1070z" fill="#51535f"/>
                            <path d="M1416 1070l504-291v291l-504 291z" fill="#7d8092"/>
                            <path d="M1202 557v221a214 124 0 0 0 428 0V557z" fill="url(#cyl)"/>
                            <ellipse cx="1416" cy="557" rx="214" ry="124" fill="#a0a4bb" stroke="#e0760c" stroke-width="2"/>
                            <path d="M942 949l50-29A89 52 60 0 1 1082 1074l-50 29z" fill="url(#boss)"/>
                            <path d="M942 949A89 52 60 0 1 1032 1103A89 52 60 0 1 942 949z" fill="#51535f"/>
                        </g>
                        <rect x="1315" y="478" width="243" height="30" fill="#a0a4bf"/>
                        <text class="ghost" x="1357" y="501">전체 화면 캡처(S)</text>
                        <path d="M1441 484h8M1445 480v8" stroke="#f58a1c" stroke-width="1.500"/>
                    </svg>

                    <div class="hud">
                        <button class="tool" aria-label="전체 보기"><svg><use href="#i-zoom-fit"/></svg></button>
                        <button class="tool" aria-label="영역 확대"><svg><use href="#i-zoom-area"/></svg></button>
                        <button class="tool" aria-label="이전 뷰"><svg><use href="#i-scope"/><use href="#i-back-arrow"/></svg></button>
                        <button class="tool" aria-label="단면도"><svg><use href="#i-section"/></svg></button>
                        <button class="tool" aria-label="동적 주석 뷰"><svg viewBox="0 0 30 30"><use href="#i-scope"/><path d="M10 1h7l-4 6h4L3 15l4-7H3z" fill="#ffd75e" stroke="#c47a1c"/><text class="letter-a" x="21" y="26" text-anchor="middle" font-size="18" fill="#5b9bbd">A</text></svg></button>
                        <button class="tool" aria-label="뷰 방향"><svg><use href="#i-cube-hud"/></svg></button>
                        <button class="drop" aria-label="뷰 방향 옵션"><svg><use href="#i-arrow"/></svg></button>
                        <button class="tool" aria-label="표시 유형"><svg><use href="#i-display"/></svg></button>
                        <button class="drop" aria-label="표시 유형 옵션"><svg><use href="#i-arrow"/></svg></button>
                        <button class="tool" aria-label="숨기기/보이기"><svg><use href="#i-eye"/></svg></button>
                        <button class="drop" aria-label="숨기기 옵션"><svg><use href="#i-arrow"/></svg></button>
                        <button class="tool" aria-label="표현 편집"><svg><use href="#i-appearance"/></svg></button>
                        <button class="tool" aria-label="화면 적용"><svg><use href="#i-scene"/></svg></button>
                        <button class="drop" aria-label="화면 옵션"><svg><use href="#i-arrow"/></svg></button>
                        <button class="tool" aria-label="뷰 설정"><svg><use href="#i-monitor"/></svg></button>
                        <button class="drop" aria-label="뷰 설정 옵션"><svg><use href="#i-arrow"/></svg></button>
                    </div>

                    <div class="doc-controls">
                        <button class="win-btn" aria-label="왼쪽 창"><svg><use href="#i-prev-doc"/></svg></button>
                        <button class="win-btn" aria-label="오른쪽 창"><svg><use href="#i-next-doc"/></svg></button>
                        <button class="win-btn" aria-label="문서 최소화"><svg><use href="#i-min"/></svg></button>
                        <button class="win-btn" aria-label="문서 복원"><svg><use href="#i-restore"/></svg></button>
                        <button class="win-btn" aria-label="문서 닫기"><svg><use href="#i-close"/></svg></button>
                    </div>

                    <div class="task-pane">
                        <button aria-label="SOLIDWORKS 리소스"><svg><use href="#i-home"/></svg></button>
                        <button aria-label="설계 라이브러리"><svg><use href="#i-library"/></svg></button>
                        <button aria-label="파일 탐색기"><svg><use href="#i-folder-open"/></svg></button>
                        <button aria-label="뷰 팔레트"><svg><use href="#i-palette"/></svg></button>
                        <button aria-label="표현"><svg><use href="#i-ball"/></svg></button>
                        <button aria-label="사용자 정의 속성"><svg><use href="#i-props"/></svg></button>
                        <button class="active" aria-label="포럼"><svg><use href="#i-forum"/></svg></button>
                    </div>

                    <button class="splitter" aria-label="패널 접기"><i></i></button>

                    <svg class="triad" viewBox="0 0 90 84" aria-hidden="true">
                        <path d="M41 52V28" stroke="#1c6b1f" stroke-width="5"/><path d="M41 15l7 11-4 5h-6l-4-5z" fill="#1f8a24"/>
                        <path d="M41 52L20 65" stroke="#1515a8" stroke-width="5"/><path d="M9 71l6-11 8 2 0 9z" fill="#1b1bd8"/>
                        <path d="M41 52l21 13" stroke="#a31212" stroke-width="5"/><path d="M74 71l-7-11-7 2 0 9z" fill="#d81c1c"/>
                        <text x="41" y="12" text-anchor="middle" fill="#168a16">Y</text>
                        <text x="5" y="78" text-anchor="middle" fill="#1414e0">Z</text>
                        <text x="76" y="78" text-anchor="middle" fill="#e01414">X</text>
                    </svg>
                    <div class="view-name">*등각 보기</div>
                </main>
            </div>

            <nav class="sheet-tabs">
                <div class="sheet-nav">
                    <button aria-label="처음"><svg viewBox="0 0 20 16"><path d="M5 2v12M14 2v12L6 8z" stroke="#80829a" stroke-width="2" fill="#80829a"/></svg></button>
                    <button aria-label="이전"><svg viewBox="0 0 20 16"><path d="M13 2v12L6 8z" fill="#80829a"/></svg></button>
                    <button aria-label="다음"><svg viewBox="0 0 20 16"><path d="M7 2v12l7-6z" fill="#80829a"/></svg></button>
                    <button aria-label="마지막"><svg viewBox="0 0 20 16"><path d="M15 2v12M6 2v12l8-6z" stroke="#80829a" stroke-width="2" fill="#80829a"/></svg></button>
                </div>
                <button class="sheet active">모델</button>
                <button class="sheet">3D 뷰</button>
                <button class="sheet last">모션 스터디 1</button>
            </nav>
        </div>

        <aside class="views">
            <button aria-label="면에 수직으로 보기"><svg><use href="#i-normal"/></svg></button>
            <hr>
            <button aria-label="정면"><svg><use href="#i-front"/></svg></button>
            <button aria-label="뒷면"><svg><use href="#i-rear"/></svg></button>
            <button aria-label="좌측면"><svg><use href="#i-left"/></svg></button>
            <button aria-label="우측면"><svg><use href="#i-right"/></svg></button>
            <button aria-label="윗면"><svg><use href="#i-top"/></svg></button>
            <button aria-label="아랫면"><svg><use href="#i-bottom"/></svg></button>
            <button class="pressed" aria-label="등각 보기"><svg><use href="#i-iso"/></svg></button>
            <button aria-label="부등각 투영"><svg><use href="#i-tri"/></svg></button>
            <button aria-label="이등각 투영"><svg><use href="#i-di"/></svg></button>
            <hr>
            <button aria-label="뷰 방향 표시"><svg><use href="#i-scope"/></svg></button>
            <hr class="full">
        </aside>
    </div>

    <footer class="statusbar">
        <span class="edition">SOLIDWORKS Education Edition - 강의 전용</span>
        <span class="cell spacer"></span>
        <span class="cell mode">편집 중: 파트</span>
        <span class="cell spacer wide"></span>
        <button class="units">MMGS</button>
        <svg class="units-arrow" viewBox="0 0 8 6"><path d="M0 6h8L4 0z" fill="#333"/></svg>
        <svg class="tag"><use href="#i-tag"/></svg>
    </footer>

    <div class="taskbar">
        <button class="start" aria-label="시작"><svg width="24" height="24" viewBox="0 0 24 24"><path d="M0 3l10-1v9H0zM11 2l13-2v11H11zM0 12h10v10l-10-1zM11 12h13v12l-13-2z" fill="#fff"/></svg></button>
        <label class="task-search">
            <svg width="26" height="26" viewBox="0 0 26 26"><circle cx="16" cy="9" r="8" fill="none" stroke="#222" stroke-width="2"/><path d="M10 15L1 25" stroke="#222" stroke-width="2"/></svg>
            <input type="text" placeholder="검색하려면 여기에 입력하십시오." aria-label="검색">
        </label>
        <button class="sys" aria-label="Cortana"><svg width="24" height="24" viewBox="0 0 24 24"><circle cx="12" cy="12" r="10" fill="none" stroke="#fff" stroke-width="2.800"/></svg></button>
        <button class="sys" aria-label="작업 보기"><svg width="26" height="26" viewBox="0 0 26 26"><path d="M1 1v3h16V1M1 7h16v11H1zM1 25v-4h16v4M23 1v6M23 13v12" fill="none" stroke="#fff" stroke-width="1.400"/><path d="M21 8h4v4h-4z" fill="#fff"/></svg></button>
        <div class="apps">
            <button class="stacked" aria-label="Chrome"><svg width="34" height="34" viewBox="0 0 36 36"><circle cx="18" cy="18" r="17" fill="#1da462"/><path d="M3 10A17 17 0 0 1 33 10H18a8 8 0 0 0-7 12z" fill="#dd5144"/><path d="M33 10A17 17 0 0 1 17 35l8-13a8 8 0 0 0-2-12z" fill="#ffcd46"/><circle cx="18" cy="18" r="8" fill="#fff"/><circle cx="18" cy="18" r="6.200" fill="#4c8bf5"/></svg></button>
            <button aria-label="Edge"><svg width="36" height="36" viewBox="0 0 36 36"><path d="M1 17C2 5 12 0 19 0c10 0 17 7 17 15 0 8-12 12-14 7 2-4 1-8-5-9-8-1-14 2-16 7z" fill="url(#edge-top)"/><path d="M0 19c0-8 8-10 14-9 5 1 8 4 8 6-4-3-9 0-9 6 1 9 9 12 14 10-3 3-8 4-11 4C6 35 0 28 0 19z" fill="#0f7ad6"/><path d="M13 22c0 7 10 10 19 5-4 8-13 10-19 8-9-3-8-16 1-21z" fill="#114a94"/></svg></button>
            <button aria-label="파일 탐색기"><svg width="34" height="30" viewBox="0 0 34 30"><path d="M1 2h13l2 3H1z" fill="#e09b00" stroke="#e09b00" stroke-width="2"/><path d="M1 5h32v24H1z" fill="#fbd265"/><path d="M6 29V17l2-1h18l2 1v12h-5v-6H11v6z" fill="#3c96dc"/></svg></button>
            <button class="current stacked" aria-label="SOLIDWORKS 2018"><svg width="38" height="38" viewBox="0 0 38 38"><path d="M18 1l17 6v22L18 37 1 29V7z" fill="#b31217" stroke="#220203" stroke-width="1.500"/><path d="M1 7l17 6 17-6-17-6z" fill="#e3262b"/><path d="M18 13l17-6v22L18 37z" fill="#8a0c10"/><text x="10" y="25" text-anchor="middle" font-size="16" font-weight="700" fill="#fff">S</text><text x="26" y="25" text-anchor="middle" font-size="16" font-weight="700" fill="#fff">W</text><text x="25" y="36" text-anchor="middle" font-size="9" font-weight="700" fill="#fff" stroke="#111" stroke-width="2" paint-order="stroke">2018</text></svg></button>
            <button class="stacked" aria-label="카카오톡"><svg width="36" height="36" viewBox="0 0 36 36"><rect width="36" height="36" rx="1" fill="#fbe300"/><ellipse cx="18" cy="17" rx="14" ry="11" fill="#371d1e"/><path d="M10 24l-1 7 8-5z" fill="#371d1e"/><text x="18" y="21" text-anchor="middle" font-size="9" font-weight="700" fill="#fbe300">TALK</text></svg></button>
        </div>

        <button class="weather">
            <svg width="32" height="30" viewBox="0 0 32 30"><circle cx="14" cy="15" r="14" fill="url(#sun)"/><path d="M14 24c-4 0-4-6 0-6 0-6 9-6 10-1 6 0 7 7 1 7z" fill="#cfe6fb"/></svg>
            <span>33°C</span><span>대체로 화창</span>
        </button>
        <button class="tray" aria-label="숨겨진 아이콘"><svg width="18" height="12" viewBox="0 0 18 12"><path d="M1 11l8-9 8 9" fill="none" stroke="#fff" stroke-width="1.500"/></svg></button>
        <button class="tray" aria-label="카메라"><svg width="18" height="24" viewBox="0 0 18 24"><path d="M1 7h10v11H1zM11 11l5-3v9l-5-3M4 4c2-3 7-3 9 0M4 21c2 3 7 3 9 0" fill="none" stroke="#fff" stroke-width="1.300"/></svg></button>
        <button class="tray" aria-label="업데이트"><svg width="26" height="24" viewBox="0 0 26 24"><path d="M1 4l22-3v20L1 20z" fill="none" stroke="#fff" stroke-width="1.400"/><path d="M8 11c1-4 6-4 8-1M16 7v3h-3M16 13c-1 4-6 4-8 1M8 17v-3h3" fill="none" stroke="#fff" stroke-width="1.300"/><circle cx="20" cy="18" r="6" fill="#ff9500"/></svg></button>
        <button class="tray" aria-label="배터리"><svg width="26" height="18" viewBox="0 0 26 18"><path d="M6 4h17v12H6z" fill="#fff"/><path d="M24 8h2v4h-2z" fill="#fff"/><path d="M2 0v3M6 0v3M1 3h6v3L4 8 1 6zM4 8v8h3" fill="#1c2a40" stroke="#fff" stroke-width="1.200"/></svg></button>
        <button class="tray" aria-label="Wi-Fi"><svg width="20" height="20" viewBox="0 0 20 20"><path d="M1 19C1 8 8 1 18 1M6 19C6 11 11 6 18 6M11 19c0-4 3-8 7-8" fill="none" stroke="#ddd" stroke-width="1.400"/><circle cx="17" cy="17" r="2" fill="#fff"/></svg></button>
        <button class="tray" aria-label="음소거"><svg width="22" height="20" viewBox="0 0 22 20"><path d="M1 7h3l5-5v16l-5-5H1zM13 6l7 8M20 6l-7 8" fill="none" stroke="#fff" stroke-width="1.400"/></svg></button>
        <button class="tray ime">가</button>
        <button class="clock">오후 1:00<br>7/16/2021</button>
        <button class="notify" aria-label="알림"><svg width="36" height="36" viewBox="0 0 36 36"><path d="M0 1h24v18H13l-5 6v-6H0z" fill="#fff"/><path d="M4 6h16M4 10h16M4 14h12" stroke="#1a2742" stroke-width="1.500"/><circle cx="24" cy="24" r="11" fill="#2e3440" stroke="#8c929c"/><text x="24" y="30" text-anchor="middle" font-size="16" font-weight="700" fill="#fff">3</text></svg></button>
        <div class="show-desktop"></div>
    </div>
</body>
</html>
```
FILE: styles.css
```css
* {
    box-sizing: border-box;
}

body {
    margin: 0;
    height: 100vh;
    display: flex;
    flex-direction: column;
    overflow: hidden;
    background-color: #f7f7f7;
    color: #000;
    font-family: "Noto Sans CJK KR", "Noto Sans", sans-serif;
    font-size: 18px;
    font-weight: 350;
    line-height: 24px;
}

button {
    display: flex;
    align-items: center;
    justify-content: center;
    margin: 0;
    padding: 0;
    border: 0;
    background: none;
    color: inherit;
    font: inherit;
    white-space: nowrap;
}

input {
    min-width: 0;
    padding: 0;
    border: 0;
    outline: 0;
    background: none;
    font: inherit;
}

svg {
    display: block;
    flex: none;
}

.sprite {
    position: absolute;
    width: 0;
    height: 0;
}

.letter-a {
    font-family: "Liberation Serif", serif;
    font-weight: 700;
}

/* shared tool buttons */
.tool {
    width: 36px;
    height: 38px;
}

.tool svg {
    width: 28px;
    height: 28px;
}

.drop {
    width: 15px;
    height: 38px;
    color: #444;
}

.drop svg {
    width: 8px;
    height: 5px;
}

.win-btn {
    width: 38px;
    height: 38px;
    color: #444;
}

.win-btn svg {
    width: 20px;
    height: 20px;
}

/* title bar */
.titlebar {
    display: flex;
    align-items: center;
    height: 46px;
    border-bottom: 1px solid #808080;
}

.logo {
    display: flex;
    align-items: center;
    align-self: flex-start;
    flex: none;
    gap: 6px;
    width: 190px;
    height: 50px;
    margin: 0 28px 0 10px;
    padding-left: 8px;
    border: 1px solid #909090;
    border-top: 0;
    background: linear-gradient(160deg, #fff 50%, #dcdcdc);
    z-index: 2;
}

.logo-mark {
    width: 36px;
    height: 36px;
}

.logo-text {
    color: #d9261c;
    font-family: "Open Sans", sans-serif;
    font-size: 21px;
    font-style: italic;
    font-weight: 300;
}

.logo-text b {
    font-weight: 700;
}

.menu {
    display: flex;
    gap: 13px;
}

.pin {
    margin: 0 10px 0 25px;
}

.quick {
    display: flex;
    align-items: center;
    height: 45px;
    padding-left: 13px;
    border-left: 3px solid #b4b4b4;
}

.quick .wide {
    width: 38px;
}

.pressed {
    border: 1px solid #666;
    background-color: #b0b0b0;
}

.boxed {
    border: 1px solid #999;
    border-left: 0;
}

.doc-title {
    flex: 1;
    text-align: center;
}

.help-search {
    display: flex;
    align-items: center;
    width: 303px;
    height: 35px;
    padding: 0 1px 0 8px;
    border: 1px solid #111;
    background-color: #ebedf2;
}

.help-search input {
    flex: 1;
    margin-left: 12px;
    font-size: 17px;
}

.help-search input::placeholder {
    color: #555;
}

.user {
    width: 46px;
}

.question {
    width: 28px;
    color: #444;
    font-size: 26px;
    font-weight: 700;
}

.help-drop {
    width: 19px;
}

/* ribbon */
.ribbon {
    display: flex;
    height: 123px;
    padding: 6px 0 3px 6px;
    border-right: 1px solid #808080;
    border-bottom: 1px solid #808080;
}

.group {
    display: flex;
    padding-right: 14px;
    border-right: 1px solid #c0c0c0;
}

.group.tight {
    padding-right: 1px;
    margin-right: 1px;
}

.big {
    position: relative;
    flex-direction: column;
    justify-content: flex-start;
    width: 61px;
    padding-top: 6px;
    line-height: 23px;
}

.big.low {
    padding-top: 13px;
}

.big.slim {
    width: 44px;
}

.big.hole {
    width: 82px;
}

.big svg {
    width: 30px;
    height: 28px;
    margin-bottom: 3px;
}

.big .more {
    width: 8px;
    height: 6px;
    margin: auto 0 7px;
    color: #333;
}

.big.instant {
    width: 84px;
    border: 1px solid #666;
    background-color: #b0b0b0;
}

.stack {
    display: flex;
    flex-direction: column;
    padding-left: 3px;
}

.stack.second {
    padding-left: 14px;
}

.stack button {
    justify-content: flex-start;
    gap: 8px;
    height: 38px;
}

.stack svg {
    width: 30px;
    height: 28px;
}

/* command tabs lie over the top of the work area */
.workspace {
    position: relative;
    display: flex;
    flex: 1;
    min-height: 0;
}

.ribbon-tabs {
    position: absolute;
    left: 0;
    top: 0;
    z-index: 3;
    display: flex;
    height: 33px;
    border-bottom: 1px solid #808080;
}

.ribbon-tabs button {
    padding: 0 10px 0 11px;
    border-right: 1px solid #808080;
    background-color: #d3d3d3;
    color: #111;
}

.ribbon-tabs .active {
    background-color: #f7f7f7;
    color: #444;
}

.main {
    display: flex;
    flex-direction: column;
    flex: 1;
    min-width: 0;
}

.content {
    display: flex;
    flex: 1;
    min-height: 0;
}

/* feature tree */
.panel {
    display: flex;
    flex-direction: column;
    width: 271px;
    padding: 37px 2px 4px 1px;
    border-right: 1px solid #808080;
    overflow: hidden;
}

.panel-grip {
    display: flex;
    align-items: center;
    justify-content: center;
    height: 26px;
    margin-bottom: 4px;
    border-top: 1px solid #c0c0c0;
    border-bottom: 1px solid #c0c0c0;
}

.panel-grip i,
.splitter i {
    width: 10px;
    height: 10px;
    border: 1px solid #888;
    border-radius: 50%;
    background-color: #d8d8d8;
}

.panel-tabs {
    position: relative;
    display: flex;
    height: 38px;
    border-top: 1px solid #808080;
    overflow: hidden;
}

.panel-tabs > button {
    flex: none;
    width: 52px;
    border-right: 1px solid #808080;
    border-bottom: 1px solid #808080;
    background-color: #d3d3d3;
}

.panel-tabs > .active {
    border-bottom: 0;
    background-color: #f7f7f7;
}

.panel-tabs svg {
    width: 28px;
    height: 28px;
}

.tab-scroll {
    position: absolute;
    right: 0;
    bottom: 0;
    display: flex;
}

.tab-scroll button {
    width: 24px;
    height: 24px;
    border: 1px solid #a0a0a0;
    background-color: #f7f7f7;
}

.tab-scroll svg {
    width: 7px;
    height: 10px;
}

.filter {
    display: flex;
    align-items: center;
    height: 38px;
    margin: 1px 3px 0 4px;
    padding-left: 5px;
    border: 1px solid #c0c0c0;
}

.filter input {
    flex: 1;
}

.tree {
    margin: 0;
    padding: 0;
    list-style: none;
    font-size: 19px;
}

.tree li {
    position: relative;
    display: flex;
    align-items: center;
    gap: 6px;
    height: 32px;
    padding-left: 39px;
    white-space: nowrap;
}

.tree .root {
    padding-left: 5px;
}

.tree svg {
    width: 28px;
    height: 28px;
}

.node::before {
    content: "";
    position: absolute;
    left: 14px;
    top: 8px;
    border: 6px solid transparent;
    border-left-color: #555;
    border-right: 0;
}

.rollback {
    height: 6px;
    margin-bottom: auto;
    border-bottom: 1px solid #14307a;
    background-color: #3a8fc8;
}

.scrollbar {
    display: flex;
    height: 26px;
    background-color: #f0f0f0;
}

.scrollbar button {
    width: 26px;
}

.track {
    flex: 1;
}

.thumb {
    width: 80%;
    height: 100%;
    background-color: #cdcdcd;
}

/* graphics area */
.viewport {
    position: relative;
    flex: 1;
    min-width: 0;
    background:
        radial-gradient(ellipse 72% 54% at 8% 0, #fff 45%, rgba(255, 255, 255, 0) 100%),
        linear-gradient(90deg, rgba(255, 255, 255, 0) 75%, rgba(255, 255, 255, 0.4)),
        linear-gradient(#e6e9f1 0%, #dfe3ed 42%, #e2e5ee 50%, #f4f5f8 59%, #fff 68%, #fff 80%, #f5f6f9 100%);
}

.model {
    position: absolute;
    width: 100%;
    height: 100%;
}

.ghost {
    font-size: 18px;
    fill: #9699ad;
}

.hud,
.doc-controls {
    position: absolute;
    top: 2px;
    display: flex;
}

.hud {
    left: 0;
    right: 5px;
    justify-content: center;
}

.hud .tool {
    width: 38px;
    opacity: 0.85;
}

.hud .drop {
    width: 14px;
    color: #888;
}

.doc-controls {
    right: 6px;
}

.doc-controls .win-btn {
    color: #999;
}

.task-pane {
    position: absolute;
    top: 75px;
    right: 0;
    width: 39px;
    border: 1px solid #808080;
    border-right: 0;
}

.task-pane button {
    width: 100%;
    height: 36px;
    border-bottom: 1px solid #808080;
    background-color: #d3d3d3;
}

.task-pane .active {
    border-bottom: 0;
    background-color: #f7f7f7;
}

.task-pane svg {
    width: 28px;
    height: 28px;
}

.splitter {
    position: absolute;
    left: -1px;
    top: 629px;
    width: 14px;
    height: 61px;
    border: 1px solid #808080;
    border-left: 0;
    background-color: #f7f7f7;
}

.triad {
    position: absolute;
    left: 19px;
    bottom: 46px;
    width: 90px;
    height: 84px;
    overflow: visible;
    font-family: "Open Sans", sans-serif;
    font-size: 16px;
}

.view-name {
    position: absolute;
    left: 12px;
    bottom: 1px;
    font-size: 21px;
}

/* model / motion tabs */
.sheet-tabs {
    display: flex;
    height: 25px;
    border-top: 1px solid #808080;
    font-size: 19px;
    line-height: 22px;
}

.sheet-nav {
    display: flex;
    width: 98px;
    border-top: 1px solid #222;
    border-left: 2px solid #9fb9bb;
    background-color: #a6a8bf;
}

.sheet-nav button {
    flex: 1;
    border: 1px solid #80829a;
}

.sheet-nav svg {
    width: 20px;
    height: 16px;
}

.sheet {
    align-items: flex-start;
    padding: 0 12px;
    border-right: 1px solid #808080;
    background-color: #d3d3d3;
}

.sheet.active {
    padding-left: 20px;
    background-color: #f7f7f7;
}

.sheet.last {
    padding-right: 24px;
}

/* standard views */
.views {
    width: 46px;
    padding: 3px 1px 0 5px;
    border-left: 1px solid #e4e4e4;
}

.views::before {
    content: "";
    display: block;
    height: 6px;
    border-top: 3px dotted #aaa;
}

.views button {
    width: 38px;
    height: 38px;
}

.views svg {
    width: 28px;
    height: 28px;
}

.views hr {
    height: 1px;
    margin: 4px 0 4px 2px;
    border: 0;
    background-color: #808080;
}

.views .full {
    margin-left: -4px;
}

/* status bar */
.statusbar {
    display: flex;
    align-items: center;
    height: 27px;
    padding-top: 3px;
    border-top: 1px solid #808080;
}

.edition {
    flex: 1;
    padding-left: 1px;
}

.cell {
    height: 24px;
    border-left: 1px solid #d0d0d0;
}

.spacer {
    width: 9px;
}

.spacer.wide {
    width: 17px;
    border-right: 1px solid #d0d0d0;
}

.mode {
    width: 115px;
    padding-left: 4px;
}

.units {
    margin-left: 59px;
}

.units-arrow {
    width: 6px;
    height: 4px;
    margin: 0 70px 0 49px;
}

.tag {
    width: 30px;
    height: 24px;
    margin-right: 3px;
}

/* windows taskbar */
.taskbar {
    display: flex;
    height: 60px;
    background: linear-gradient(90deg, #20353e, #22363f 50%, #1d2b3d 75%, #1a2645);
    color: #fff;
}

.start,
.sys {
    width: 72px;
}

.task-search {
    display: flex;
    align-items: center;
    width: 516px;
    padding-left: 16px;
    border: 2px solid #c0c0c0;
    background-color: #f1f1f1;
}

.task-search input {
    flex: 1;
    margin-left: 17px;
    font-size: 25px;
}

.task-search input::placeholder {
    color: #222;
}

.apps {
    display: flex;
    flex: 1;
    margin-left: 4px;
}

.apps button {
    position: relative;
    width: 75px;
}

.apps button::after {
    content: "";
    position: absolute;
    left: 7px;
    right: 7px;
    bottom: 0;
    height: 3px;
    background-color: #76b9ed;
}

.apps .stacked::after {
    background: linear-gradient(90deg, #76b9ed 78%, #42739a 78%, #42739a 80%, #5f94bd 80%);
}

.apps .current {
    border-right: 7px solid #3f4d54;
    background-color: #4d5e65;
}

.apps .current::after {
    left: 1px;
    right: -7px;
}

.weather {
    gap: 14px;
    padding-right: 16px;
    font-size: 22px;
}

.tray {
    width: 36px;
}

.ime {
    font-size: 24px;
}

.clock {
    width: 110px;
    line-height: 28px;
}

.notify {
    width: 56px;
}

.show-desktop {
    width: 19px;
    border-right: 7px solid #1a2645;
    box-shadow: inset -2px 0 #7a8296;
}
```
